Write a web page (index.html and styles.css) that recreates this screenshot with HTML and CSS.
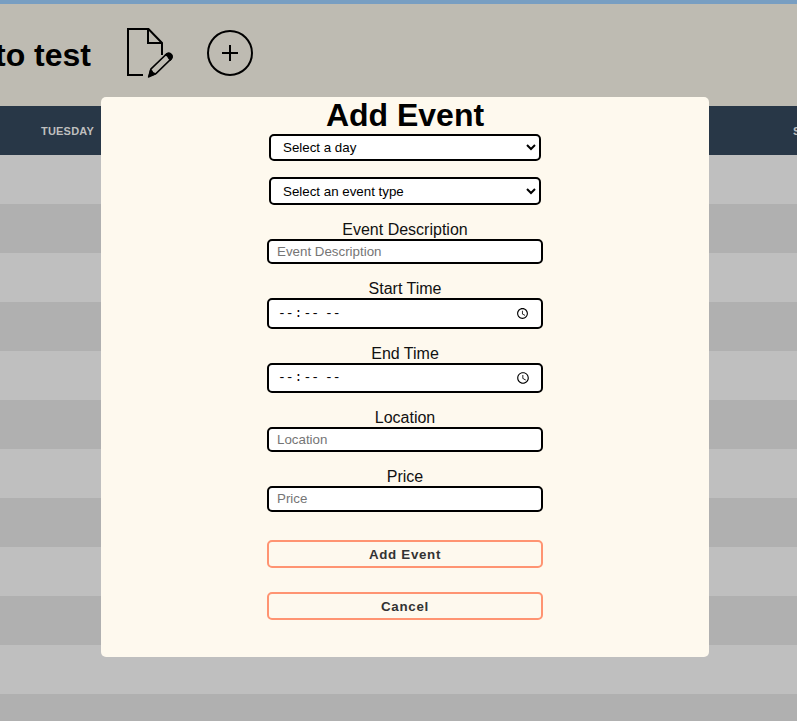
FILE: index.html
```html
<!DOCTYPE html>
<html lang="en">
<head>
<meta charset="utf-8">
<title>Add Event</title>
<link rel="stylesheet" href="styles.css">
</head>
<body>
<header class="header">
  <h2 class="trip">to test</h2>
  <svg class="edit" viewBox="0 0 50 54" fill="none" stroke="#000" stroke-width="2">
    <path d="M18 48H3V2H23.500L37 16V28M23 2V16H37"/>
    <path stroke-width="1.700" d="M24 49L26 42L41 27.500C43.500 25 48.500 29 46 32L31 46.500Z"/>
    <path fill="#000" stroke="none" d="M23 51L25 42.500Q28 43 28 45Q30 45 31 47.500ZM39.500 28Q43.500 23 47 27Q49.500 30 45.500 34L43.500 32Q42.500 29 39.500 28Z"/>
  </svg>
  <svg class="plus" viewBox="0 0 48 48" fill="none" stroke="#000" stroke-width="2">
    <circle cx="24" cy="24" r="22"/>
    <path d="M24 16V32M16 24H32"/>
  </svg>
</header>
<div class="days"><span class="tuesday">TUESDAY</span><span class="next">S</span></div>
<main class="rows">
  <div></div><div></div><div></div><div></div><div></div><div></div>
  <div></div><div></div><div></div><div></div><div></div><div></div>
</main>
<section class="modal">
  <h1>Add Event</h1>
  <form class="form">
    <select class="day"><option>Select a day</option></select>
    <select class="type"><option>Select an event type</option></select>
    <label for="desc">Event Description</label>
    <input id="desc" type="text" placeholder="Event Description">
    <label for="start">Start Time</label>
    <input id="start" class="start" type="time">
    <label for="end">End Time</label>
    <input id="end" class="end" type="time">
    <label for="loc">Location</label>
    <input id="loc" type="text" placeholder="Location">
    <label for="price">Price</label>
    <input id="price" class="price" type="text" placeholder="Price">
    <button class="add" type="button">Add Event</button>
    <button type="button">Cancel</button>
  </form>
</section>
</body>
</html>
```
FILE: styles.css
```css
* { box-sizing: border-box; }
body {
  margin: 0;
  height: 721px;
  overflow: hidden;
  position: relative;
  font-family: "Liberation Sans", Arial, sans-serif;
  background: #bfbfbf;
}
.header {
  height: 106px;
  border-top: 4px solid #789ec2;
  background: #bebbb2;
  display: flex;
  align-items: flex-start;
}
.trip {
  margin: 33px 0 0 -5px;
  width: 96px;
  font-size: 32px;
  line-height: 37px;
  white-space: nowrap;
}
.edit { width: 50px; height: 54px; margin: 23px 0 0 34px; }
.plus { width: 48px; height: 48px; margin: 25px 0 0 31px; }
.days {
  height: 49px;
  background: #283747;
  color: #bfbfbf;
  font-size: 11px;
  font-weight: bold;
  letter-spacing: .2px;
  line-height: 50px;
  display: flex;
  justify-content: space-between;
  padding-left: 41px;
}
.next { width: 4px; overflow: hidden; }
.rows { height: 566px; overflow: hidden; }
.rows div { height: 49px; background: #bfbfbf; }
.rows div:nth-child(even) { background: #b0b0b0; }
.modal {
  position: absolute;
  left: 101px;
  top: 97px;
  width: 608px;
  height: 560px;
  border-radius: 5px;
  background: #fef9ee;
}
h1 { margin: 0; font-size: 32px; line-height: 37px; text-align: center; }
.form { display: flex; flex-direction: column; align-items: center; }
select, input, button {
  font-family: inherit;
  font-size: 13.333px;
  border: 2px solid #000;
  border-radius: 5px;
  width: 276px;
  margin: 0;
}
select { width: 272px; background: #fff; color: #000; padding: 0 1px 0 8px; }
.day { height: 27px; margin-bottom: 16px; }
.type { height: 28px; margin-bottom: 15px; }
label { font-size: 16px; line-height: 19px; height: 19px; color: #111; }
input { height: 25px; padding: 0 8px; background: #fff; margin-bottom: 15px; }
.start { height: 31px; }
.end { height: 30px; }
.start, .end { font-family: "Liberation Mono", monospace; font-size: 13px; padding: 0 8px; }
.price { height: 26px; padding-bottom: 1px; margin-bottom: 28px; }
button {
  height: 28px;
  padding: 0;
  border-color: #ff9472;
  background: transparent;
  color: #333;
  font-weight: bold;
  letter-spacing: .7px;
}
.add { margin-bottom: 24px; }
```
